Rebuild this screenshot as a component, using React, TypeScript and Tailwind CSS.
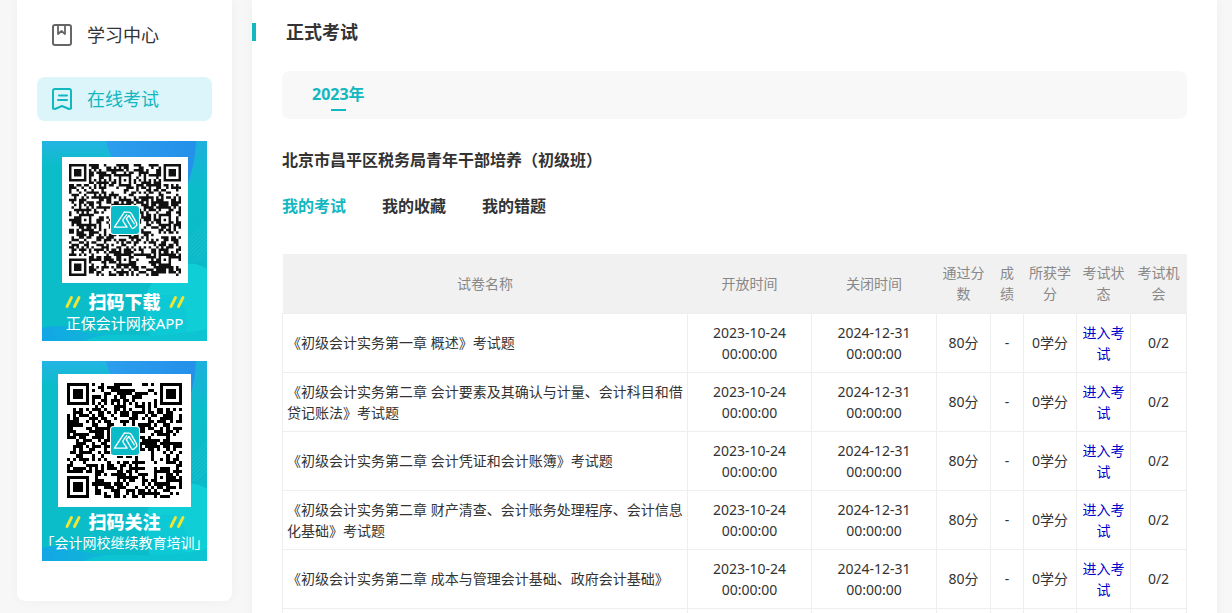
import React from "react";

const YEARS = ["2023年"];

const TABS = ["我的考试", "我的收藏", "我的错题"];

const COLUMNS = [
  "试卷名称",
  "开放时间",
  "关闭时间",
  "通过分数",
  "成绩",
  "所获学分",
  "考试状态",
  "考试机会",
];

const EXAMS = [
  "《初级会计实务第一章 概述》考试题",
  "《初级会计实务第二章 会计要素及其确认与计量、会计科目和借贷记账法》考试题",
  "《初级会计实务第二章 会计凭证和会计账簿》考试题",
  "《初级会计实务第二章 财产清查、会计账务处理程序、会计信息化基础》考试题",
  "《初级会计实务第二章 成本与管理会计基础、政府会计基础》",
];

// Dark modules of a code as one path, one unit per module
function qrPath(size: number, aligns: number[][], seed: number) {
  const ring = (x: number, y: number, cx: number, cy: number) =>
    Math.max(Math.abs(x - cx), Math.abs(y - cy));
  const finders = [
    [3, 3],
    [size - 4, 3],
    [3, size - 4],
  ];
  let state = seed;
  let d = "";
  for (let y = 0; y < size; y++) {
    for (let x = 0; x < size; x++) {
      state = (state * 1103515245 + 12345) % 2147483648;
      let dark = state / 2147483648 < 0.52;
      if (x === 6 || y === 6) dark = (x + y) % 2 === 0;
      for (const [cx, cy] of aligns) {
        const r = ring(x, y, cx, cy);
        if (r <= 2) dark = r !== 1;
      }
      for (const [cx, cy] of finders) {
        const r = ring(x, y, cx, cy);
        if (r <= 4) dark = r !== 2 && r !== 4;
      }
      if (dark) d += `M${x} ${y}h1v1h-1z`;
    }
  }
  return d;
}

const APP_QR = qrPath(
  45,
  [
    [22, 6],
    [6, 22],
    [22, 22],
    [38, 22],
    [22, 38],
    [38, 38],
  ],
  2023
);
const WECHAT_QR = qrPath(37, [[30, 30]], 77);

function BookIcon() {
  return (
    <svg width="22" height="22" viewBox="0 0 22 22" fill="none" stroke="#666" strokeWidth="2">
      <rect x="2" y="1" width="18" height="20" rx="2" />
      <path d="M7 1v9l3.500-3 3.500 3V1" strokeWidth="1.800" strokeLinejoin="round" />
    </svg>
  );
}

function PaperIcon() {
  return (
    <svg
      width="22"
      height="22"
      viewBox="0 0 22 22"
      fill="none"
      stroke="#12b7bf"
      strokeWidth="2"
      strokeLinejoin="round"
      strokeLinecap="round"
    >
      <path d="M4 1h14a2 2 0 0 1 2 2v17.500l-2 .5-7-3-7 3-2-.5V3a2 2 0 0 1 2-2z" />
      <path d="M8 7.500h8M7 12h9" />
    </svg>
  );
}

function Logo() {
  return (
    <svg viewBox="0 0 88 88" className="absolute inset-0 m-auto size-[30px]">
      <rect width="88" height="88" rx="10" fill="#fff" />
      <rect x="3" y="3" width="82" height="82" rx="8" fill="#0bbcc8" />
      <g fill="none" stroke="#fff" strokeWidth="4" strokeLinejoin="round" strokeLinecap="round">
        <path d="M42 21 13 65h37L39 49q-3-5 1-9l9-11" />
        <path d="M42 21h13q5 0 8 5l15 27q3 5-2 9l-5 5q-5 4-8-1L48 40l8-9 15 24" />
      </g>
    </svg>
  );
}

function BannerArt({ id }: { id: string }) {
  return (
    <svg viewBox="0 0 165 200" className="absolute inset-0 size-full" preserveAspectRatio="none">
      <defs>
        <linearGradient id={`${id}-left`} x1="0" y1="0" x2="0" y2="1">
          <stop offset="0" stopColor="#24b4e4" />
          <stop offset="1" stopColor="#0bbdc9" />
        </linearGradient>
        <linearGradient id={`${id}-top`} x1="0" y1="0" x2="1" y2="0">
          <stop offset="0" stopColor="#2b9eec" />
          <stop offset="1" stopColor="#2490ea" />
        </linearGradient>
        <linearGradient id={`${id}-side`} x1="0" y1="0" x2="0" y2="1">
          <stop offset="0" stopColor="#1db0dc" />
          <stop offset="0.400" stopColor="#0bbdc9" />
          <stop offset="1" stopColor="#0bbac8" />
        </linearGradient>
        <linearGradient id={`${id}-foot`} x1="0" y1="0" x2="1" y2="0">
          <stop offset="0" stopColor="#12a6e6" />
          <stop offset="1" stopColor="#0fbad2" />
        </linearGradient>
      </defs>
      <rect width="165" height="200" fill="#0bbdc9" />
      <rect width="165" height="24" fill={`url(#${id}-left)`} />
      <path d="M145 0h20v126h-20z" fill={`url(#${id}-side)`} />
      <path d="M64 0q2 10 8 20l70 32q11-24 12-52z" fill={`url(#${id}-top)`} />
      <g stroke="#2fc6d8" strokeWidth="0.800" opacity="0.600">
        <path d="M146 100l19-19M146 104l19-19M146 108l19-19M146 112l19-19M148 114l17-17M152 114l13-13M150 120l15-15M154 120l11-11" />
      </g>
      <path d="M146 123q10-1 19 5v72h-55q-9-22-6-46 8-26 42-31z" fill="#10ced6" />
      <path d="M104 154q-3 22 6 46h30q14-30-10-46z" fill="#0dc6d4" opacity="0.700" />
      <path d="M0 187q24-5 38 3 14 4 34 2l-28 8H0z" fill={`url(#${id}-foot)`} />
      <path d="M42 200q16-8 50-6 36 2 73-6v12z" fill="#0dc4d3" />
    </svg>
  );
}

function Slashes() {
  return (
    <svg width="16" height="12" viewBox="0 0 16 12" stroke="#f0e632" strokeWidth="2.800" strokeLinecap="round">
      <path d="M2 10.500 6.500 1.500M9.500 10.500 14 1.500" />
    </svg>
  );
}

function AppBanner() {
  return (
    <a
      href="#app"
      className="relative mx-[5px] mt-5 flex h-[200px] flex-col items-center overflow-hidden pt-4 text-white"
    >
      <BannerArt id="app" />
      <div className="relative size-[126px] bg-white p-[7px]">
        <svg viewBox="0 0 45 45" className="size-full">
          <path d={APP_QR} fill="#111" />
        </svg>
        <Logo />
      </div>
      <div className="relative mt-2 flex items-center gap-2 text-lg leading-[22px] font-black">
        <Slashes />
        扫码下载
        <Slashes />
      </div>
      <p className="relative text-[15px] leading-5 whitespace-nowrap">正保会计网校APP</p>
    </a>
  );
}

function WechatBanner() {
  return (
    <a
      href="#wechat"
      className="relative mx-[5px] mt-5 flex h-[200px] flex-col items-center overflow-hidden pt-[13px] text-white"
    >
      <BannerArt id="wechat" />
      <div className="relative size-[133px] bg-white p-[9px]">
        <svg viewBox="0 0 37 37" className="size-full" shapeRendering="crispEdges">
          <path d={WECHAT_QR} fill="#000" />
        </svg>
        <Logo />
      </div>
      <div className="relative mt-1 flex items-center gap-2 text-lg leading-[22px] font-black">
        <Slashes />
        扫码关注
        <Slashes />
      </div>
      <p className="relative text-sm leading-5 whitespace-nowrap">「会计网校继续教育培训」</p>
    </a>
  );
}

function Sidebar() {
  return (
    <aside className="w-[215px] shrink-0 rounded-b-lg bg-white px-5 pt-[13px] pb-10 shadow-[0_0_12px_rgba(0,0,0,0.04)]">
      <nav className="flex flex-col gap-5 text-lg">
        <a href="#study" className="flex h-11 items-center gap-3.5 rounded-lg px-3.5 text-[#333]">
          <BookIcon />
          学习中心
        </a>
        <a href="#exam" className="flex h-11 items-center gap-3.5 rounded-lg bg-[#dbf5fa] px-3.5 text-[#12b7bf]">
          <PaperIcon />
          在线考试
        </a>
      </nav>
      <AppBanner />
      <WechatBanner />
    </aside>
  );
}

function ExamTable() {
  return (
    <table className="mt-9 w-full table-fixed border-collapse text-center text-sm leading-[21px]">
      <colgroup>
        <col />
        <col className="w-[124px]" />
        <col className="w-[125px]" />
        <col className="w-[54px]" />
        <col className="w-[33px]" />
        <col className="w-[53px]" />
        <col className="w-[54px]" />
        <col className="w-[56px]" />
      </colgroup>
      <thead>
        <tr className="h-[59px] bg-[#f1f1f1] text-[#888]">
          {COLUMNS.map((column) => (
            <th key={column} className="px-1 font-normal">
              {column}
            </th>
          ))}
        </tr>
      </thead>
      <tbody>
        {EXAMS.map((name) => (
          <tr key={name} className="h-[59px]">
            <td className="border border-[#eee] pl-1 text-left">{name}</td>
            <td className="border border-[#eee] px-1">2023-10-24 00:00:00</td>
            <td className="border border-[#eee] px-1">2024-12-31 00:00:00</td>
            <td className="border border-[#eee] px-1">80分</td>
            <td className="border border-[#eee] px-1">-</td>
            <td className="border border-[#eee] px-1">0学分</td>
            <td className="border border-[#eee] px-1">
              <a href="#enter" className="text-[#0000cc]">
                进入考试
              </a>
            </td>
            <td className="border border-[#eee] px-1">0/2</td>
          </tr>
        ))}
        <tr className="h-[59px]">
          {COLUMNS.map((column) => (
            <td key={column} className="border border-[#eee]" />
          ))}
        </tr>
      </tbody>
    </table>
  );
}

export default function App() {
  return (
    <div className="flex h-screen items-start gap-5 overflow-hidden bg-[#f7f7f7] pr-[15px] pl-[17px] font-['Noto_Sans','Noto_Sans_CJK_SC',sans-serif] text-[#333]">
      <Sidebar />
      <main className="min-h-screen min-w-0 flex-1 bg-white pt-5 shadow-[0_0_12px_rgba(0,0,0,0.04)]">
        <div className="flex h-6 items-center gap-[30px]">
          <span className="h-[18px] w-1 bg-[#12b7bf]" />
          <h1 className="text-lg leading-6 font-bold">正式考试</h1>
        </div>

        <div className="px-[30px]">
          <div className="mt-[27px] flex h-12 items-center rounded-lg bg-[#f8f8f8] px-[30px]">
            {YEARS.map((year) => (
              <button
                key={year}
                className="flex h-8 flex-col items-center justify-between text-base leading-[30px] font-bold text-[#12b7bf]"
              >
                {year}
                <span className="h-0.5 w-[15px] shrink-0 bg-[#12b7bf]" />
              </button>
            ))}
          </div>

          <h2 className="mt-[29px] text-base leading-6 font-bold">
            北京市昌平区税务局青年干部培养（初级班）
          </h2>

          <div className="mt-[22px] flex gap-9 text-base leading-6 font-bold">
            {TABS.map((tab, i) => (
              <button key={tab} className={i === 0 ? "text-[#12b7bf]" : "text-[#333]"}>
                {tab}
              </button>
            ))}
          </div>

          <ExamTable />
        </div>
      </main>
    </div>
  );
}
